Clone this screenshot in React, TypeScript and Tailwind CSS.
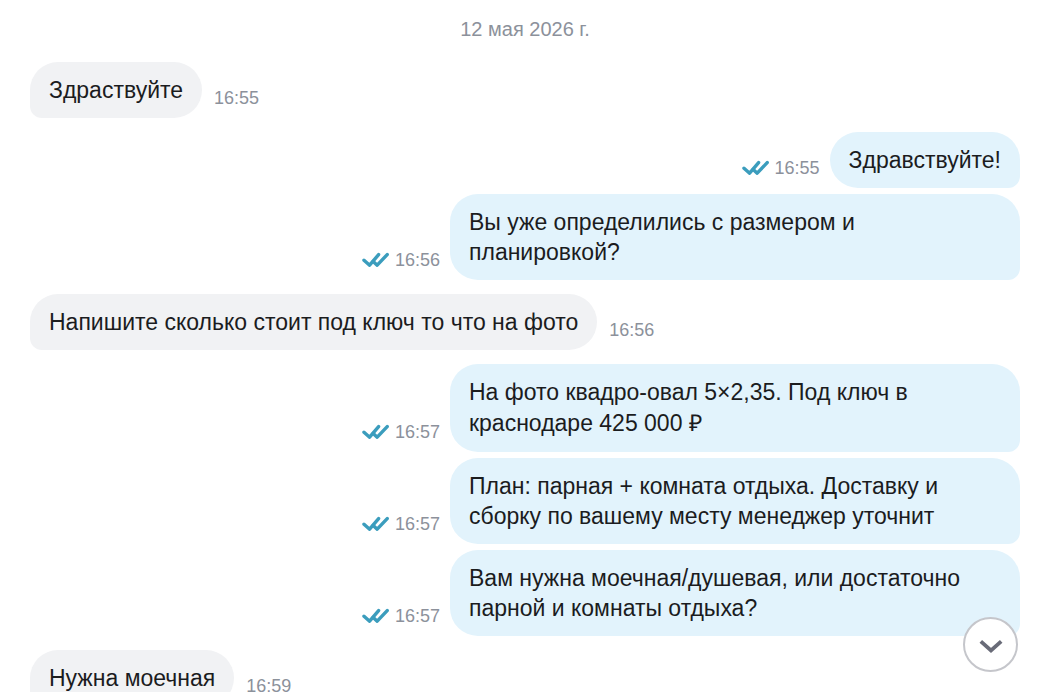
import { clsx } from 'clsx';

type Message = {
  id: number;
  text: string;
  time: string;
  own?: boolean;
};

// consecutive messages of one side are stacked tightly inside a group
const groups: Message[][] = [
  [{ id: 1, text: 'Здраствуйте', time: '16:55' }],
  [
    { id: 2, text: 'Здравствуйте!', time: '16:55', own: true },
    { id: 3, text: 'Вы уже определились с размером и планировкой?', time: '16:56', own: true },
  ],
  [{ id: 4, text: 'Напишите сколько стоит под ключ то что на фото', time: '16:56' }],
  [
    {
      id: 5,
      text: 'На фото квадро-овал 5×2,35. Под ключ в краснодаре 425\u00a0000\u00a0₽',
      time: '16:57',
      own: true,
    },
    {
      id: 6,
      text: 'План: парная + комната отдыха. Доставку и сборку по вашему месту менеджер уточнит',
      time: '16:57',
      own: true,
    },
    {
      id: 7,
      text: 'Вам нужна моечная/душевая, или достаточно парной и комнаты отдыха?',
      time: '16:57',
      own: true,
    },
  ],
  [{ id: 8, text: 'Нужна моечная', time: '16:59' }],
];

function ReadIcon() {
  return (
    <svg
      width="27"
      height="16"
      viewBox="0 0 27 16"
      fill="none"
      stroke="#3b9dbd"
      strokeWidth="3.4"
      strokeLinecap="round"
      strokeLinejoin="round"
      aria-hidden="true"
    >
      <path d="M2 8.2 7.6 13.2 16.6 2.6" />
      <path d="M11.2 9.4 15.2 13.2 25.2 2.6" />
    </svg>
  );
}

function MessageRow({ message }: { message: Message }) {
  const { text, time, own } = message;

  return (
    <li className={clsx('flex items-end', own ? 'flex-row-reverse gap-2.5' : 'gap-3')}>
      <p
        className={clsx(
          'max-w-[570px] px-[19px] py-[13px] text-[23px]',
          // the currency sign needs a slightly taller line
          text.includes('₽') ? 'leading-[31px]' : 'leading-[30px]',
          own
            ? 'rounded-[28px] rounded-br-xl bg-[#e2f3fc] text-[#1b1c1e]'
            : 'rounded-[28px] rounded-bl-xl bg-[#f1f2f4] text-[#1b1c1e]',
        )}
      >
        {text}
      </p>
      <div className="mb-2 flex shrink-0 items-center gap-1.5">
        {own && <ReadIcon />}
        <time className="text-lg leading-6 text-[#8c919b]">{time}</time>
      </div>
    </li>
  );
}

export default function App() {
  return (
    <main className="relative h-screen overflow-hidden bg-white px-[30px] pt-4 font-['Liberation_Sans',Arial,sans-serif]">
      <h2 className="mb-5 text-center text-xl leading-[26px] text-[#8c919b]">12 мая 2026 г.</h2>
      <div className="flex flex-col gap-3.5">
        {groups.map((messages) => (
          <ol key={messages[0].id} className="flex flex-col gap-1.5">
            {messages.map((message) => (
              <MessageRow key={message.id} message={message} />
            ))}
          </ol>
        ))}
      </div>
      <button
        type="button"
        aria-label="Вниз"
        className="absolute right-8 bottom-5 flex size-[55px] items-center justify-center rounded-full border-2 border-[#c5c6cb] bg-white"
      >
        <svg width="24" height="16" viewBox="0 0 24 16" fill="none" aria-hidden="true">
          <path d="M1.8 4.4 12 13.4 22.2 4.4" stroke="#696b78" strokeWidth="3.8" />
        </svg>
      </button>
    </main>
  );
}
